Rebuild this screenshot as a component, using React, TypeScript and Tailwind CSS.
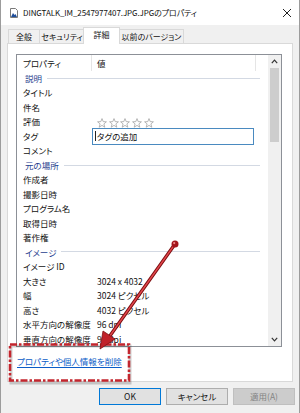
import React from "react";

type Row =
  | { kind: "group"; label: string }
  | { kind: "row"; label: string; value?: string }
  | { kind: "stars"; label: string }
  | { kind: "tag"; label: string };

const rows: Row[] = [
  { kind: "group", label: "説明" },
  { kind: "row", label: "タイトル" },
  { kind: "row", label: "件名" },
  { kind: "stars", label: "評価" },
  { kind: "tag", label: "タグ" },
  { kind: "row", label: "コメント" },
  { kind: "group", label: "元の場所" },
  { kind: "row", label: "作成者" },
  { kind: "row", label: "撮影日時" },
  { kind: "row", label: "プログラム名" },
  { kind: "row", label: "取得日時" },
  { kind: "row", label: "著作権" },
  { kind: "group", label: "イメージ" },
  { kind: "row", label: "イメージ ID" },
  { kind: "row", label: "大きさ", value: "3024 x 4032" },
  { kind: "row", label: "幅", value: "3024 ピクセル" },
  { kind: "row", label: "高さ", value: "4032 ピクセル" },
  { kind: "row", label: "水平方向の解像度", value: "96 dpi" },
  { kind: "row", label: "垂直方向の解像度", value: "96 dpi" },
];

const Star = () => (
  <svg width="10" height="10" viewBox="0 0 10 10" className="shrink-0">
    <path
      d="M5 0.6 L6.2 3.6 L9.4 3.8 L6.9 5.9 L7.8 9.2 L5 7.4 L2.2 9.2 L3.1 5.9 L0.6 3.8 L3.8 3.6 Z"
      fill="none"
      stroke="#a4a4a4"
      strokeWidth="0.8"
      strokeLinejoin="round"
    />
  </svg>
);

const ListRow = ({ row }: { row: Row }) => {
  if (row.kind === "group") {
    return (
      <div className="flex h-[14.6px] items-center pl-[8px] pr-[8px]">
        <span className="text-[#1f3e8e]">{row.label}</span>
        <div className="ml-[5px] h-px flex-1 bg-[#d3d9e3]" />
      </div>
    );
  }
  return (
    <div className="flex h-[14.6px] items-center">
      <div className="w-[75px] shrink-0 pl-[6px] whitespace-nowrap">{row.label}</div>
      {row.kind === "row" && (
        <div className="pl-[5px] whitespace-nowrap">{row.value}</div>
      )}
      {row.kind === "stars" && (
        <div className="flex gap-[1.7px] pl-[5px] pt-[2px]">
          <Star />
          <Star />
          <Star />
          <Star />
          <Star />
        </div>
      )}
      {row.kind === "tag" && (
        <div className="flex h-[17px] w-[162px] items-center border border-[#4a8ac0] bg-white pl-[2px]">
          <div className="h-[10px] w-px bg-[#222]" />
          <span className="pl-[1px]">タグの追加</span>
        </div>
      )}
    </div>
  );
};

const Chevron = ({ up }: { up?: boolean }) => (
  <svg width="7" height="5" viewBox="0 0 7 5">
    <path
      d={up ? "M0.8 4.2 L3.5 1.2 L6.2 4.2" : "M0.8 0.8 L3.5 3.8 L6.2 0.8"}
      fill="none"
      stroke="#333"
      strokeWidth="1.2"
    />
  </svg>
);

export default function App() {
  return (
    <div className="relative flex h-[413px] w-[300px] flex-col overflow-hidden border-x border-[#9c9c9c] bg-[#f0f0f0] font-['Noto_Sans_CJK_JP','Noto_Sans',sans-serif] text-[8.5px] leading-none text-[#111] [font-feature-settings:'palt']">
      {/* title bar */}
      <div className="flex h-[25px] shrink-0 items-center bg-white pl-[9px] pr-[6px]">
        <svg width="8" height="10" viewBox="0 0 8 10" className="shrink-0">
          <path d="M0.5 0.5 H5.5 L7.5 2.5 V9.5 H0.5 Z" fill="#fff" stroke="#7a7a7a" />
          <path d="M1 9 L3 5 L4.5 7 L5.5 6 L7 9 Z" fill="#1f4e9a" />
        </svg>
        <span className="ml-[5px] text-[8px] tracking-[-0.1px] text-[#111]">
          DINGTALK_IM_2547977407.JPG.JPGのプロパティ
        </span>
        <svg width="10" height="10" viewBox="0 0 10 10" className="ml-auto mr-[1px]">
          <path d="M1 1 L9 9 M9 1 L1 9" stroke="#222" strokeWidth="1" />
        </svg>
      </div>

      {/* body */}
      <div className="flex flex-1 flex-col px-[6px] pt-[2px]">
        <div className="relative z-10 -mb-px flex items-end pl-[1px] text-[8px]">
          <div className="flex h-[15px] w-[32px] items-center justify-center border border-b-0 border-[#d9d9d9]">
            全般
          </div>
          <div className="-ml-px flex h-[15px] w-[46px] items-center justify-center border border-b-0 border-[#d9d9d9]">
            セキュリティ
          </div>
          <div className="-ml-[2px] flex h-[17px] w-[37px] items-center justify-center border border-b-0 border-[#d9d9d9] bg-white pb-[2px]">
            詳細
          </div>
          <div className="-ml-px flex h-[15px] w-[65px] items-center justify-center border border-b-0 border-[#d9d9d9]">
            以前のバージョン
          </div>
        </div>

        <div className="flex h-[339px] w-[286px] flex-col border border-[#d9d9d9] bg-white pl-[8px] pt-[10px]">
          {/* list view */}
          <div className="flex h-[293px] w-[266px] border border-[#8c9097]">
            <div className="flex flex-1 flex-col overflow-hidden">
              <div className="flex h-[16px] shrink-0 items-center">
                <div className="flex h-full w-[75px] items-center border-r border-[#e5e5e5] pl-[6px]">
                  プロパティ
                </div>
                <div className="flex h-full w-[164px] items-center border-r border-[#e5e5e5] pl-[5px]">
                  値
                </div>
              </div>
              {rows.map((r) => (
                <ListRow key={r.label} row={r} />
              ))}
            </div>
            <div className="flex w-[13px] shrink-0 flex-col bg-[#f0f0f0]">
              <div className="flex h-[13px] items-center justify-center">
                <Chevron up />
              </div>
              <div className="flex-1">
                <div className="mx-auto h-[74px] w-[9px] bg-[#cdcdcd]" />
              </div>
              <div className="flex h-[13px] items-center justify-center">
                <Chevron />
              </div>
            </div>
          </div>

          <div className="pl-[1px] pt-[10px]">
            <span className="text-[8.5px] text-[#0b5cc7] underline decoration-[0.8px] underline-offset-[1.5px]">
              プロパティや個人情報を削除
            </span>
          </div>
        </div>

        {/* buttons */}
        <div className="mt-[6px] flex justify-end gap-[5px]">
          <button className="flex h-[17px] w-[62px] items-center justify-center border border-[#0078d7] bg-[#e1e1e1] text-[8.5px]">
            OK
          </button>
          <button className="flex h-[17px] w-[62px] items-center justify-center border border-[#adadad] bg-[#e1e1e1] text-[8.5px]">
            キャンセル
          </button>
          <button className="-mr-[2px] flex h-[17px] w-[62px] items-center justify-center border border-[#bfbfbf] bg-[#cccccc] text-[8.5px] text-[#838383]">
            適用(A)
          </button>
        </div>
      </div>

      {/* annotation overlay */}
      <svg
        className="pointer-events-none absolute left-0 top-0"
        width="300"
        height="413"
        viewBox="0 0 300 413"
      >
        <rect x="10" y="346" width="119" height="37" fill="none" stroke="#000" strokeOpacity="0.18" strokeWidth="3" />
        <rect x="9" y="344.5" width="119" height="36" fill="none" stroke="#c3262e" strokeWidth="2.6" strokeDasharray="7 2 2.5 2" />
        <line x1="174" y1="244" x2="106" y2="340" stroke="#7d0f12" strokeWidth="3.4" strokeLinecap="round" />
        <line x1="174" y1="244" x2="106" y2="340" stroke="#e4474c" strokeWidth="1.3" strokeLinecap="round" />
        <path d="M99 349 L102 331 L114 339 Z" fill="#c0222a" stroke="#7d0f12" strokeWidth="0.8" strokeLinejoin="round" />
        <circle cx="174" cy="244" r="3.5" fill="#a3161c" />
        <circle cx="173.2" cy="243.1" r="1.1" fill="#f08a8a" />
      </svg>
    </div>
  );
}
